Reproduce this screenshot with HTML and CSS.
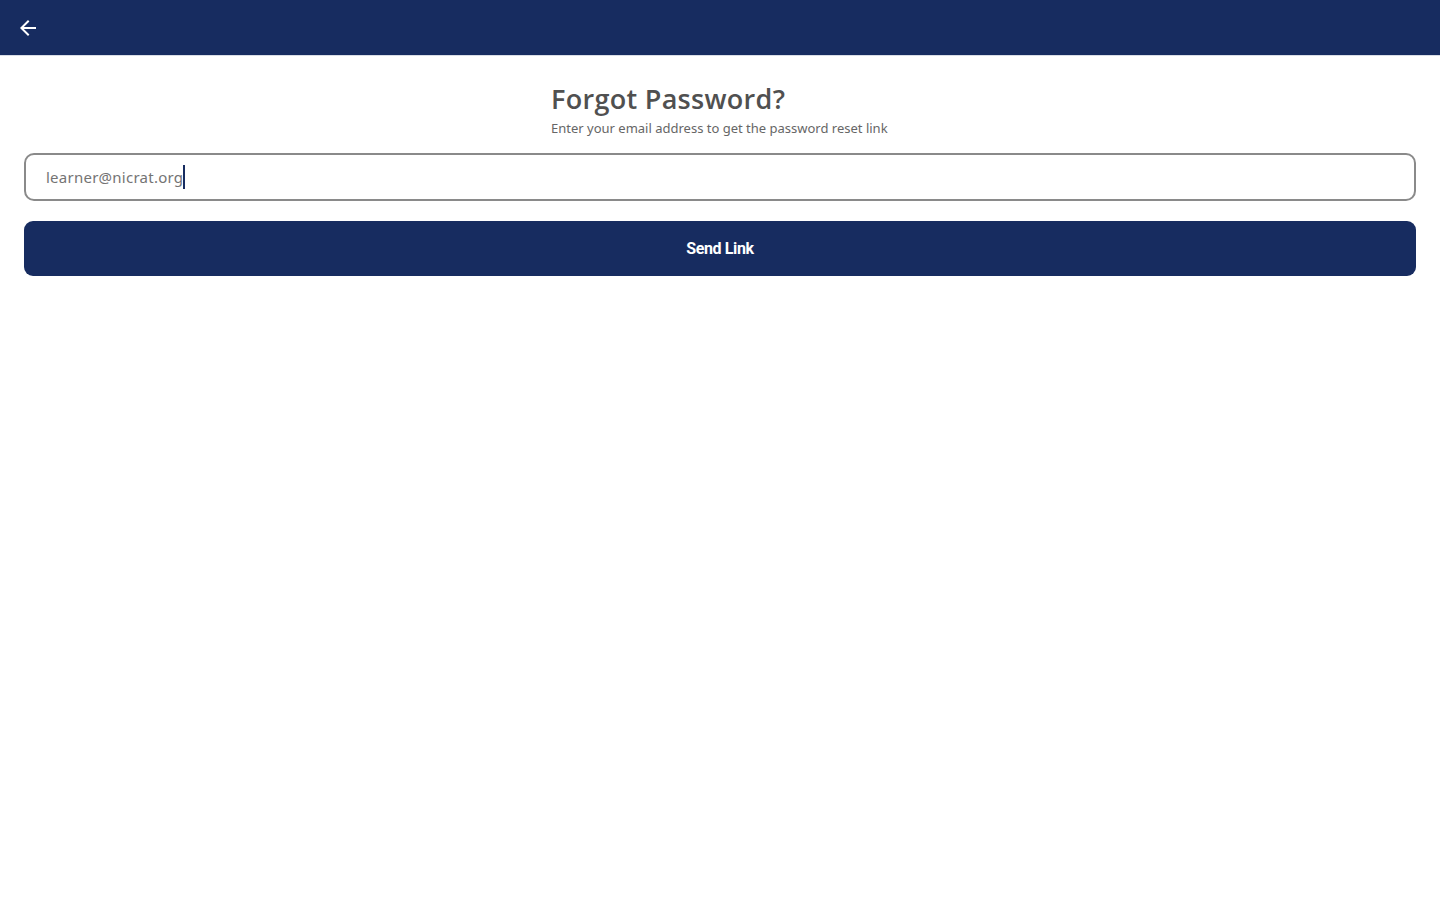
FILE: index.html
```html
<!DOCTYPE html>
<html>
<head>
<meta charset="utf-8">
<link rel="stylesheet" href="styles.css">
</head>
<body>
<header class="topbar">
  <button class="back" aria-label="Back">
    <svg width="24" height="24" viewBox="0 0 24 24"><path d="M20 11H7.83l5.59-5.59L12 4l-8 8 8 8 1.41-1.41L7.83 13H20v-2z" fill="#ffffff"/></svg>
  </button>
</header>
<main class="content">
  <div class="heading">
    <h1 class="title">Forgot Password?</h1>
    <p class="subtitle">Enter your email address to get the password reset link</p>
  </div>
  <div class="field">
    <span class="value">learner@nicrat.org</span><span class="caret"></span>
  </div>
  <button class="send">Send Link</button>
</main>
</body>
</html>
```

FILE: styles.css
```css
* { box-sizing: border-box; }
html, body { margin: 0; padding: 0; background: #ffffff; }
body { font-family: "Open Sans", "Noto Sans", sans-serif; }
.topbar {
  height: 56px;
  background: #172c60;
  display: flex;
  align-items: center;
  padding-left: 16px;
  border-bottom: 1px solid #d9dde6;
}
.back {
  background: none;
  border: 0;
  padding: 0;
  width: 24px;
  height: 24px;
  display: flex;
}
.content {
  padding: 25px 24px 0 24px;
  display: flex;
  flex-direction: column;
}
.heading {
  align-self: center;
  display: flex;
  flex-direction: column;
  width: 338px;
}
.title {
  margin: 0;
  font-family: "Open Sans", sans-serif;
  font-size: 27px;
  font-weight: 600;
  color: #505050;
  line-height: 36px;
  letter-spacing: 0.3px;
}
.subtitle {
  margin: 2px 0 0 0;
  font-family: "Noto Sans", sans-serif;
  font-size: 13px;
  color: #666666;
  line-height: 18px;
  white-space: nowrap;
  letter-spacing: 0px;
}
.field {
  margin-top: 16px;
  height: 48px;
  border: 2px solid #8a8a8a;
  border-radius: 10px;
  display: flex;
  align-items: center;
  padding-left: 20px;
}
.value {
  font-family: "Noto Sans", sans-serif;
  font-size: 15px;
  color: #747474;
  letter-spacing: 0.25px;
}
.caret {
  width: 2px;
  height: 24px;
  background: #172c60;
}
.send {
  margin-top: 20px;
  height: 55px;
  border: 0;
  border-radius: 9px;
  background: #172c60;
  color: #ffffff;
  font-family: Roboto, sans-serif;
  font-weight: 700;
  font-size: 16px;
  letter-spacing: -0.4px;
}
```
